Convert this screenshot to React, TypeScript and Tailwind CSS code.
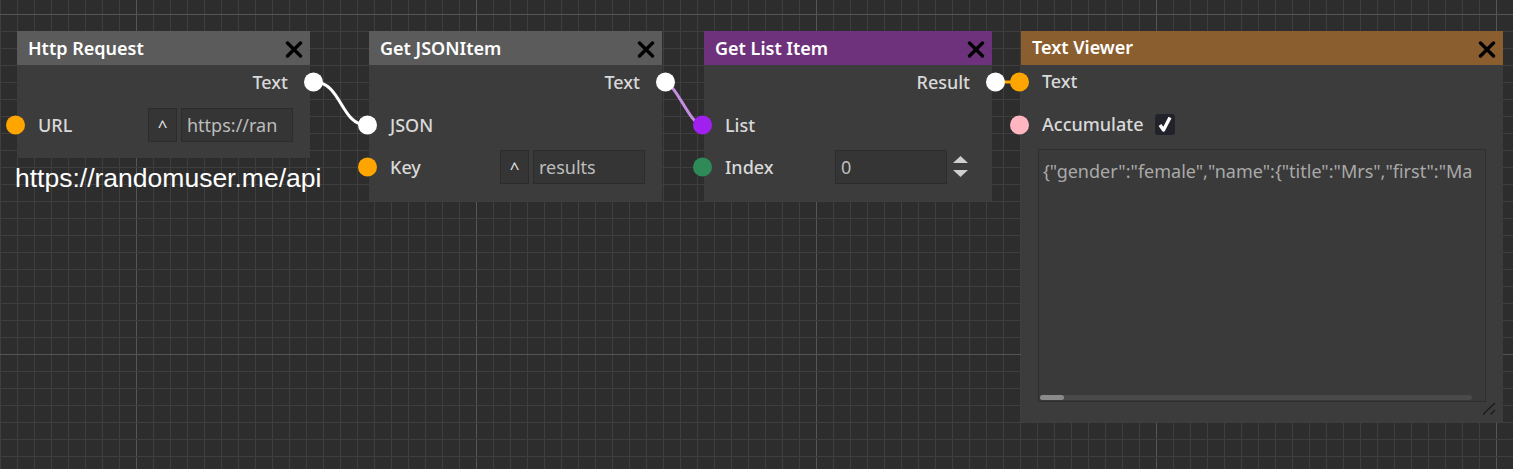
import type { ReactNode } from 'react';

const W = 1513;
const H = 469;

function Grid() {
  const xs: number[] = [];
  for (let x = 0; x <= W; x += 17) xs.push(x);
  const ys: number[] = [];
  for (let y = 14; y <= H; y += 17) ys.push(y);
  return (
    <svg className="absolute inset-0" width={W} height={H}>
      {xs.map((x) => (
        <rect key={'v' + x} x={x} y={0} width={1} height={H} fill={(x - 136) % 340 === 0 ? '#555555' : '#3e3e3e'} />
      ))}
      {ys.map((y) => (
        <rect key={'h' + y} x={0} y={y} width={W} height={1} fill={(y - 14) % 340 === 0 ? '#555555' : '#3e3e3e'} />
      ))}
    </svg>
  );
}

function Wires() {
  return (
    <svg className="absolute inset-0" width={W} height={H}>
      <path d="M314 82 C 342 82, 340 125, 367 125" stroke="#ffffff" strokeWidth="3" fill="none" />
      <path d="M665 83 C 676 83, 690 125, 702 125" stroke="#c58ee4" strokeWidth="3" fill="none" />
      <path d="M996 82 L 1018 82" stroke="#ffa500" strokeWidth="3" fill="none" />
    </svg>
  );
}

function CloseX() {
  return (
    <svg width="18" height="17" viewBox="0 0 18 17" className="mt-[3px]">
      <path d="M2.5 2 L15.5 15 M15.5 2 L2.5 15" stroke="#000" strokeWidth="3.4" strokeLinecap="round" />
    </svg>
  );
}

function Title({ text, bg }: { text: string; bg: string }) {
  return (
    <div className={`h-[34px] flex items-center justify-between pl-[11px] pr-[7px] ${bg}`}>
      <span className="text-[18px] font-semibold text-white">{text}</span>
      <CloseX />
    </div>
  );
}

function InPin({ color }: { color: string }) {
  return <span className={`absolute -left-[11px] top-1/2 -translate-y-1/2 h-[19px] w-[19px] rounded-full ${color}`} />;
}

function OutPin({ color }: { color: string }) {
  return <span className={`absolute -right-[13px] top-1/2 -translate-y-1/2 h-[19px] w-[19px] rounded-full ${color}`} />;
}

function Row({ h, children, pin, pr = 'pr-[17px]' }: { h: string; children: ReactNode; pin?: string; pr?: string }) {
  return (
    <div className={`relative flex items-center justify-between pl-[21px] ${pr} ${h}`}>
      {pin && <InPin color={pin} />}
      {children}
    </div>
  );
}

function Label({ children }: { children: ReactNode }) {
  return <span className="text-[18px] font-medium text-[#d9d9d9]">{children}</span>;
}

function OutRow({ label, pin = 'bg-white' }: { label: string; pin?: string }) {
  return (
    <div className="relative flex items-center justify-end pr-[22px] h-[34px]">
      <Label>{label}</Label>
      <OutPin color={pin} />
    </div>
  );
}

function StringField({ value }: { value: string }) {
  return (
    <div className="flex gap-[4px] h-[34px]">
      <div className="w-[29px] flex items-center justify-center bg-[#353535] border border-[#2c2c2c] text-[#e6e6e6] text-[17px] pt-[2px]">^</div>
      <div className="w-[112px] flex items-center pl-[5px] bg-[#353535] border border-[#2c2c2c] overflow-hidden whitespace-nowrap text-[18px] text-[#bdbdbd]">
        {value}
      </div>
    </div>
  );
}

function Spinner() {
  return (
    <svg width="15" height="22" viewBox="0 0 15 22">
      <path d="M0 7 L7.5 0 L15 7 Z" fill="#cfcfcf" />
      <path d="M0 14 L15 14 L7.5 21 Z" fill="#cfcfcf" />
    </svg>
  );
}

export default function App() {
  return (
    <div className="relative overflow-hidden bg-[#2d2d2d] font-['Noto_Sans',sans-serif]" style={{ width: W, height: H }}>
      <Grid />
      <Wires />

      {/* Http Request */}
      <div className="absolute left-[17px] top-[31px] w-[293px] bg-[#3c3c3c] pb-[12px]">
        <Title text="Http Request" bg="bg-[#5b5b5b]" />
        <OutRow label="Text" />
        <Row h="h-[42px] mt-[5px]" pin="bg-[#ffa500]">
          <Label>URL</Label>
          <StringField value="https://ran" />
        </Row>
      </div>
      <div className="absolute left-[15px] top-[162px] text-[26.5px] leading-[32px] text-white font-['Liberation_Sans',Arial,sans-serif]">
        https://randomuser.me/api
      </div>

      {/* Get JSONItem */}
      <div className="absolute left-[369px] top-[31px] w-[293px] bg-[#3c3c3c] pb-[13px]">
        <Title text="Get JSONItem" bg="bg-[#5b5b5b]" />
        <OutRow label="Text" />
        <Row h="h-[42px] mt-[5px]" pin="bg-white">
          <Label>JSON</Label>
        </Row>
        <Row h="h-[42px]" pin="bg-[#ffa500]">
          <Label>Key</Label>
          <StringField value="results" />
        </Row>
      </div>

      {/* Get List Item */}
      <div className="absolute left-[704px] top-[31px] w-[288px] bg-[#3c3c3c] pb-[13px]">
        <Title text="Get List Item" bg="bg-[#6e327d]" />
        <OutRow label="Result" />
        <Row h="h-[42px] mt-[5px]" pin="bg-[#a020f0]">
          <Label>List</Label>
        </Row>
        <Row h="h-[42px]" pin="bg-[#2e8b57]" pr="pr-[24px]">
          <Label>Index</Label>
          <div className="flex items-center gap-[6px]">
            <div className="w-[112px] h-[34px] flex items-center pl-[5px] bg-[#353535] border border-[#2c2c2c] text-[18px] text-[#bdbdbd]">
              0
            </div>
            <Spinner />
          </div>
        </Row>
      </div>

      {/* Text Viewer */}
      <div className="absolute left-[1021px] top-[31px] w-[482px] h-[391px] bg-[#3c3c3c] flex flex-col">
        <Title text="Text Viewer" bg="bg-[#8a5e2f]" />
        <div className="relative flex items-center pl-[21px] h-[34px]">
          <InPin color="bg-[#ffa500]" />
          <Label>Text</Label>
        </div>
        <div className="relative flex items-center pl-[21px] h-[42px] mt-[5px] gap-[12px]">
          <InPin color="bg-[#ffb6c1]" />
          <Label>Accumulate</Label>
          <span className="w-[20px] h-[21px] rounded-[3px] bg-[#22222a] flex items-center justify-center">
            <svg width="16" height="17" viewBox="0 0 16 17">
              <path d="M3 9 L6.5 14 L13 1.5" stroke="#ffffff" strokeWidth="3.4" fill="none" strokeLinejoin="round" />
            </svg>
          </span>
        </div>
        <div className="mx-[17px] mt-[4px] h-[254px] bg-[#3a3a3a] border border-[#2f2f2f] flex flex-col">
          <div className="flex-1 pl-[4px] pt-[8px] overflow-hidden whitespace-nowrap text-[18px] text-[#a9a9a9]">
            {'{"gender":"female","name":{"title":"Mrs","first":"Ma'}
          </div>
          <div className="mx-[1px] mb-[1px] mr-[13px] h-[5px] rounded-full bg-[#4a4a4a]">
            <div className="w-[24px] h-[5px] rounded-full bg-[#8a8a8a]" />
          </div>
        </div>
        <div className="flex-1 flex justify-end items-end pr-[7px] pb-[7px]">
          <svg width="14" height="13" viewBox="0 0 14 13">
            <path d="M1 12.5 L13 1 M8.5 12.5 L13 8" stroke="#1e1e1e" strokeWidth="1.6" />
          </svg>
        </div>
      </div>
    </div>
  );
}
